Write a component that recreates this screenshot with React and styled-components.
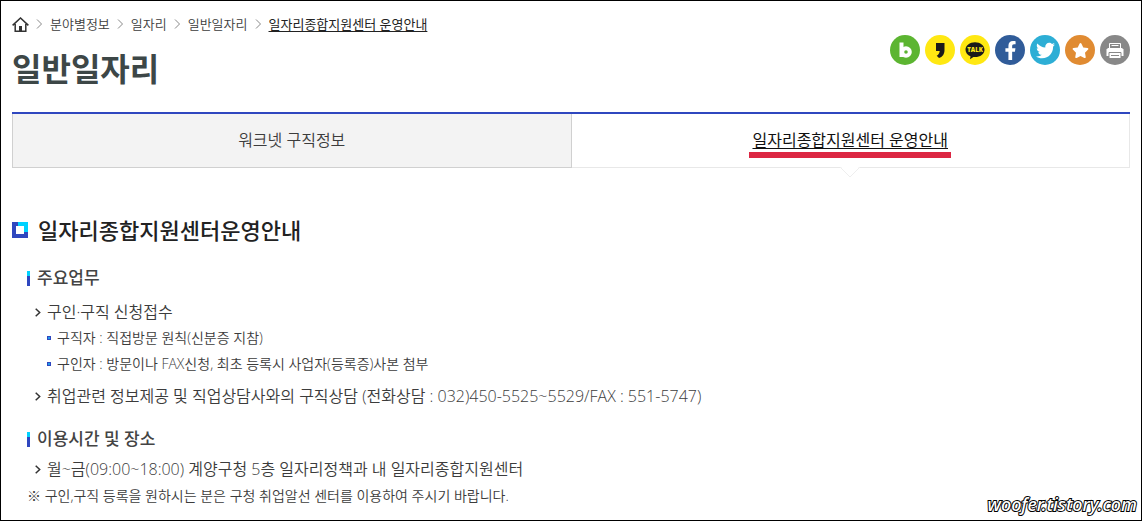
import styled, { createGlobalStyle, css } from 'styled-components'
import { FaFacebookF, FaStar, FaTwitter } from 'react-icons/fa'

const GlobalStyle = createGlobalStyle`
    *, *::before{
        box-sizing: border-box;
        margin: 0;
        padding: 0;
    }

    body{
        background-color: #fff;
        color: #3c3c3c;
        font-family: "Open Sans", "Noto Sans CJK KR", sans-serif;
        font-weight: 350;
    }

    ul, ol{
        list-style: none;
    }

    a{
        color: inherit;
        text-decoration: none;
    }
`

const PageStyled = styled.div`
    position: relative;
    min-height: 100vh;
    padding: 13px 11px 10px;
    border: 1px solid #000;
`

const HeaderStyled = styled.header`
    display: flex;
    justify-content: space-between;
    align-items: flex-start;
`

const BreadcrumbStyled = styled.ol`
    display: flex;
    align-items: center;
    gap: 7px;
    font-size: 13px;
    line-height: 20px;

    li{
        display: flex;
        align-items: center;
        gap: 7px;
    }

    svg{
        display: block;
    }

    a[aria-current]{
        color: #222;
        font-weight: 400;
        text-decoration: underline;
        text-underline-offset: 2px;
    }
`

const PageTitle = styled.h1`
    margin-top: 15px;
    color: #3d4747;
    font-size: 32px;
    font-weight: 700;
    line-height: 40px;
`

const ShareList = styled.ul`
    display: flex;
    gap: 5px;
    margin-top: 21px;
`

const ShareButton = styled.button`
    display: flex;
    align-items: center;
    justify-content: center;
    width: 30px;
    height: 30px;
    border: 0;
    border-radius: 50%;
    background-color: ${({ $color }) => $color};
    color: #fff;
    cursor: pointer;
`

const TabsStyled = styled.nav`
    display: flex;
    margin-top: 23px;
    border-top: 2px solid #2f47bf;
`

const Tab = styled.a`
    position: relative;
    display: flex;
    flex: 1;
    justify-content: center;
    padding: 14px 0 15px;
    border: 1px solid #d0d0d0;
    border-top: 0;
    background-color: #f3f3f3;
    font-size: 16px;
    line-height: 24px;

    ${({ $active }) => $active && css`
        border-color: #e8e8e8;
        border-left: 0;
        background-color: #fff;
        color: #111;
        font-weight: 400;

        span{
            text-decoration: underline;
            text-underline-offset: 2px;
        }
    `}
`

const TabLabel = styled.span`
    position: relative;
`

const Marker = styled.i`
    position: absolute;
    top: 100%;
    left: -3px;
    right: -3px;
    height: 6px;
    background-color: #dc2743;
`

const TabArrow = styled.svg`
    position: absolute;
    top: 100%;
    left: 50%;
    margin-left: -10px;
`

const SectionTitle = styled.h2`
    display: flex;
    align-items: center;
    gap: 10px;
    margin-top: 46px;
    color: #222;
    font-size: 22px;
    font-weight: 500;
    line-height: 32px;
`

const SubTitle = styled.h3`
    display: flex;
    align-items: center;
    gap: 7px;
    margin-top: ${({ $top }) => $top}px;
    padding-left: 15px;
    color: #444;
    font-size: 17px;
    font-weight: 500;
    line-height: 24px;

    &::before{
        content: '';
        width: 3px;
        height: 15px;
        background: linear-gradient(#00d2ff 5px, #2f47bf 5px);
    }
`

const List = styled.ul`
    display: flex;
    flex-direction: column;
    gap: 6px;
    margin-top: ${({ $top }) => $top}px;
    padding-left: 23px;
    font-size: 16px;
    line-height: 26px;
`

const Row = styled.div`
    display: flex;
    align-items: center;
    gap: 6px;
`

const SubList = styled.ul`
    padding-left: 12px;
    font-size: 14px;

    li{
        display: flex;
        align-items: center;
        gap: 6px;
    }

    li::before{
        content: '';
        width: 4px;
        height: 4px;
        border: 1px solid #2f47bf;
        background-color: #1f9be8;
    }
`

const Note = styled.p`
    margin-top: 1px;
    padding-left: 15px;
    font-size: 14px;
    line-height: 26px;
`

const Watermark = styled.span`
    position: absolute;
    right: 4px;
    bottom: 3px;
    color: #fff;
    font-family: "Noto Sans", sans-serif;
    font-size: 18px;
    font-style: italic;
    font-weight: 500;
    line-height: 26px;
    -webkit-text-stroke: 2px #000;
    paint-order: stroke fill;
`

function HomeIcon() {
    return (
        <svg width='17' height='15' viewBox='0 0 17 15' fill='none' stroke='#333' strokeWidth='1.5'>
            <path d='M.6 8.4 8.5 1l7.9 7.4M3.2 7v7.2h10.6V7' />
            <path d='M7 14V9h3v5z' fill='#333' stroke='none' />
        </svg>
    )
}

function Separator() {
    return (
        <svg width='7' height='10' viewBox='0 0 7 10' fill='none' stroke='#888'>
            <path d='M1 .5 5.5 5 1 9.5' />
        </svg>
    )
}

function Chevron() {
    return (
        <svg width='6' height='9' viewBox='0 0 6 9' fill='none' stroke='#333' strokeWidth='1.5'>
            <path d='M.7.7 4.7 4.5.7 8.3' />
        </svg>
    )
}

function SquareIcon() {
    return (
        <svg width='16' height='16' viewBox='0 0 16 16'>
            <path d='M0 0h16v16H0z' fill='#2f47bf' />
            <path d='M6 0h10v10H6z' fill='#00d2ff' />
            <path d='M4 4h8v8H4z' fill='#fff' />
        </svg>
    )
}

function BandIcon() {
    return (
        <svg width='30' height='30' viewBox='0 0 30 30' fill='none' stroke='#fff' strokeWidth='4'>
            <path d='M11.500 7.500V22' />
            <circle cx='16' cy='17' r='3.800' />
        </svg>
    )
}

function StoryIcon() {
    return (
        <svg width='30' height='30' viewBox='0 0 30 30'>
            <path d='M11 8h8.500v7c0 4-2 7-5.500 8l-2.300-2.200c1.800-1 2.800-2.600 3-4.800H11z' fill='#1a1a1a' />
        </svg>
    )
}

function TalkIcon() {
    return (
        <svg width='30' height='30' viewBox='0 0 30 30'>
            <path d='M15 7.300c5.300 0 9.500 3.300 9.500 7.400s-4.200 7.400-9.500 7.400l-1.600-.1L10 24.300l.5-3.100c-3-1.200-5-3.600-5-6.500 0-4.100 4.200-7.400 9.500-7.400z' fill='#1a1a1a' />
            <text x='15' y='17' textAnchor='middle' fill='#ffe812' fontFamily='Open Sans, sans-serif' fontSize='6' fontWeight='800'>TALK</text>
        </svg>
    )
}

function PrintIcon() {
    return (
        <svg width='30' height='30' viewBox='0 0 30 30'>
            <path d='M9.500 13V8.500h11V13' fill='none' stroke='#fff' />
            <path d='M11.500 10.500h7' stroke='#fff' />
            <path d='M8 13h14l1.500 1.500V21H6.500v-6.500z' fill='#fff' />
            <path d='M9 17.500h12V23.500H9z' fill='#fff' stroke='#888' />
            <path d='M11 20.500h8' stroke='#888' />
        </svg>
    )
}

const shares = [
    { label: '밴드', color: '#5cb531', icon: <BandIcon /> },
    { label: '카카오스토리', color: '#ffe812', icon: <StoryIcon /> },
    { label: '카카오톡', color: '#ffe812', icon: <TalkIcon /> },
    { label: '페이스북', color: '#305c99', icon: <FaFacebookF size={19} /> },
    { label: '트위터', color: '#2daed5', icon: <FaTwitter size={19} /> },
    { label: '즐겨찾기', color: '#e08b32', icon: <FaStar size={17} /> },
    { label: '인쇄', color: '#888', icon: <PrintIcon /> },
]

const crumbs = ['분야별정보', '일자리', '일반일자리', '일자리종합지원센터 운영안내']

function Header() {
    return (
        <HeaderStyled>
            <div>
                <BreadcrumbStyled>
                    <li><a href='#home' aria-label='홈'><HomeIcon /></a></li>
                    {crumbs.map((crumb, i) => (
                        <li key={crumb}>
                            <Separator />
                            <a href='#crumb' aria-current={i === crumbs.length - 1 ? 'page' : undefined}>{crumb}</a>
                        </li>
                    ))}
                </BreadcrumbStyled>
                <PageTitle>일반일자리</PageTitle>
            </div>
            <ShareList>
                {shares.map(({ label, color, icon }) => (
                    <li key={label}>
                        <ShareButton type='button' aria-label={label} $color={color}>{icon}</ShareButton>
                    </li>
                ))}
            </ShareList>
        </HeaderStyled>
    )
}

function Tabs() {
    return (
        <TabsStyled>
            <Tab href='#worknet'>워크넷 구직정보</Tab>
            <Tab href='#center' $active>
                <TabLabel>일자리종합지원센터 운영안내<Marker /></TabLabel>
                <TabArrow width='20' height='11' viewBox='0 0 20 11'>
                    <path d='M0-1h20L10 10z' fill='#fff' />
                    <path d='M0 0l10 10L20 0' fill='none' stroke='#eee' />
                </TabArrow>
            </Tab>
        </TabsStyled>
    )
}

function App() {
    return (
        <PageStyled>
            <GlobalStyle />
            <Header />
            <Tabs />
            <main>
                <SectionTitle><SquareIcon />일자리종합지원센터운영안내</SectionTitle>
                <SubTitle $top={20}>주요업무</SubTitle>
                <List $top={9}>
                    <li>
                        <Row><Chevron />구인·구직 신청접수</Row>
                        <SubList>
                            <li>구직자 : 직접방문 원칙(신분증 지참)</li>
                            <li>구인자 : 방문이나 FAX신청, 최초 등록시 사업자(등록증)사본 첨부</li>
                        </SubList>
                    </li>
                    <li>
                        <Row><Chevron />취업관련 정보제공 및 직업상담사와의 구직상담 (전화상담 : 032)450-5525~5529/FAX : 551-5747)</Row>
                    </li>
                </List>
                <SubTitle $top={18}>이용시간 및 장소</SubTitle>
                <List $top={5}>
                    <li>
                        <Row><Chevron />월~금(09:00~18:00) 계양구청 5층 일자리정책과 내 일자리종합지원센터</Row>
                    </li>
                </List>
                <Note>※ 구인,구직 등록을 원하시는 분은 구청 취업알선 센터를 이용하여 주시기 바랍니다.</Note>
            </main>
            <Watermark>woofer.tistory.com</Watermark>
        </PageStyled>
    )
}

export default App
